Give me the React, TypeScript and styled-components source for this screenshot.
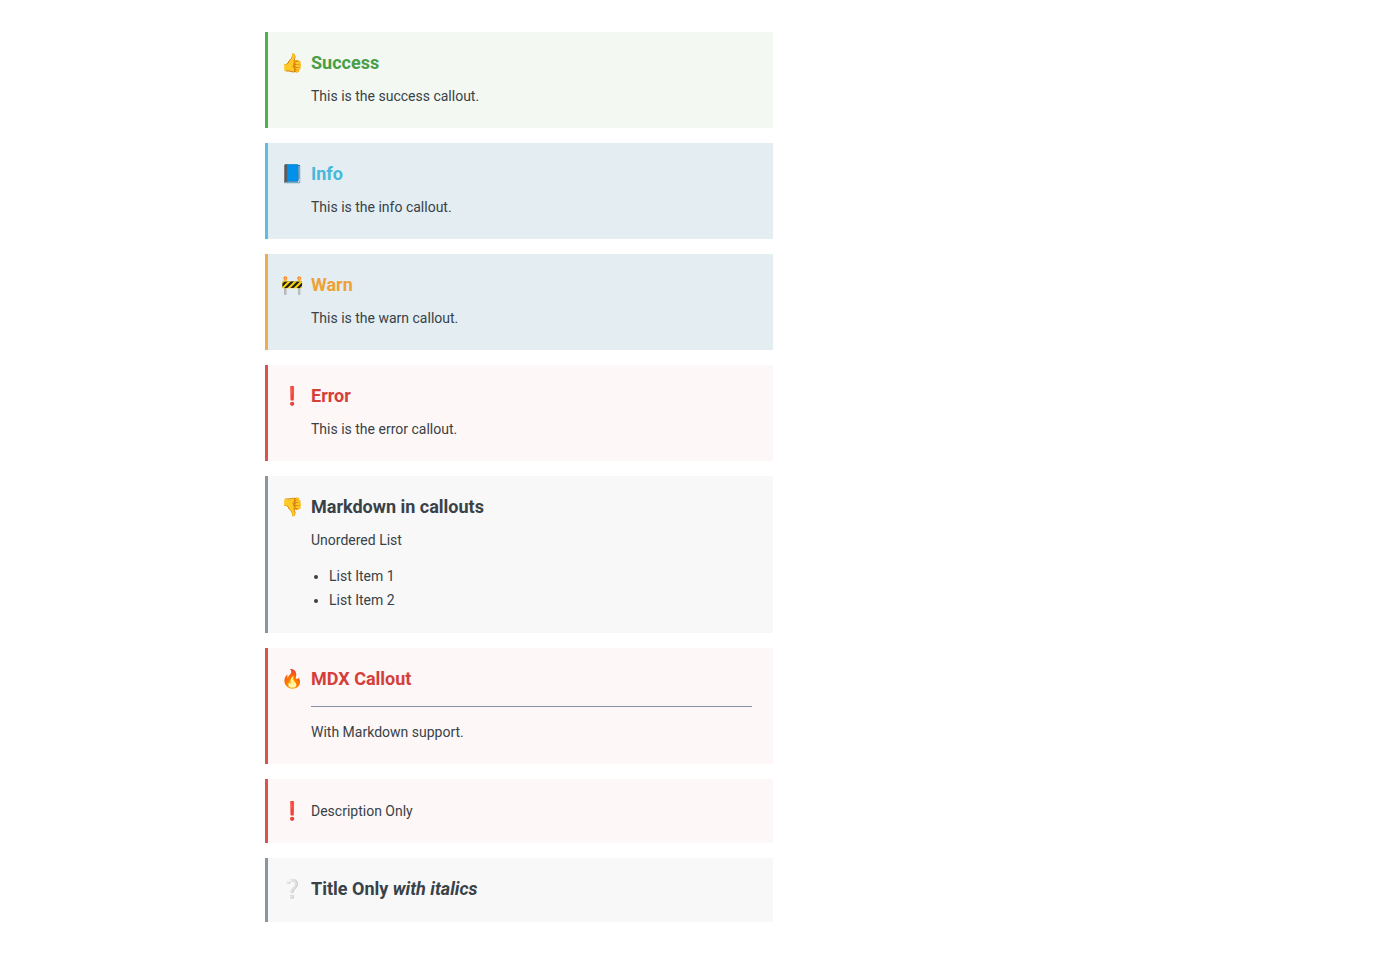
import React from "react";
import styled, { createGlobalStyle } from "styled-components";

const GlobalStyle = createGlobalStyle`
  *, *::before, *::after { box-sizing: border-box; }
  body {
    margin: 0;
    background: #ffffff;
    color: #384248;
    font-family: Roboto, "Liberation Sans", sans-serif;
    font-size: 14px;
    line-height: 24px;
  }
`;

type Theme = "success" | "info" | "warn" | "error" | "plain";

const themes: Record<Theme, { border: string; background: string; title: string }> = {
  success: { border: "#50af51", background: "#f3f8f3", title: "#489e49" },
  info: { border: "#5bc0de", background: "#e3edf2", title: "#46b8da" },
  warn: { border: "#f0ad4e", background: "#e3edf2", title: "#eea236" },
  error: { border: "#d9534f", background: "#fdf7f7", title: "#d43f3a" },
  plain: { border: "#8b959e", background: "#f8f8f9", title: "#384248" },
};

const Page = styled.main`
  display: flex;
  justify-content: center;
  padding: 32px 15px;
`;

const Layout = styled.div`
  display: flex;
  flex: 0 1 870px;
`;

const Article = styled.article`
  display: flex;
  flex: 0 1 508px;
  flex-direction: column;
  gap: 15px;
`;

const Box = styled.blockquote<{ $theme: Theme }>`
  display: grid;
  grid-template-columns: 30px 1fr;
  min-height: 64px;
  margin: 0;
  padding: 20px 21px 20px 13px;
  border-left: 3px solid ${(p) => themes[p.$theme].border};
  background: ${(p) => themes[p.$theme].background};
`;

const Icon = styled.span<{ $titled: boolean }>`
  font-size: 18px;
  line-height: ${(p) => (p.$titled ? 22 : 24)}px;
`;

const Content = styled.div`
  display: flex;
  flex-direction: column;
  gap: 10px;
`;

const Title = styled.h3<{ $theme: Theme }>`
  margin: 0;
  color: ${(p) => themes[p.$theme].title};
  font-size: 18px;
  font-weight: 700;
  line-height: 22px;
`;

const Text = styled.p`
  margin: 0;
`;

const List = styled.ul`
  margin: 2px 0 1px;
  padding-left: 18px;
`;

const Rule = styled.hr`
  width: 100%;
  height: 1px;
  margin: 6px 0 3px;
  border: 0;
  background: #8791a5;
`;

type CalloutProps = {
  theme: Theme;
  icon: string;
  title?: React.ReactNode;
  children?: React.ReactNode;
};

function Callout({ theme, icon, title, children }: CalloutProps) {
  return (
    <Box $theme={theme}>
      <Icon $titled={Boolean(title)}>{icon}</Icon>
      <Content>
        {title && <Title $theme={theme}>{title}</Title>}
        {children}
      </Content>
    </Box>
  );
}

export default function App() {
  return (
    <>
      <GlobalStyle />
      <Page>
        <Layout>
          <Article>
            <Callout theme="success" icon="👍" title="Success">
              <Text>This is the success callout.</Text>
            </Callout>
            <Callout theme="info" icon="📘" title="Info">
              <Text>This is the info callout.</Text>
            </Callout>
            <Callout theme="warn" icon="🚧" title="Warn">
              <Text>This is the warn callout.</Text>
            </Callout>
            <Callout theme="error" icon="❗️" title="Error">
              <Text>This is the error callout.</Text>
            </Callout>
            <Callout theme="plain" icon="👎" title="Markdown in callouts">
              <Text>Unordered List</Text>
              <List>
                <li>List Item 1</li>
                <li>List Item 2</li>
              </List>
            </Callout>
            <Callout theme="error" icon="🔥" title="MDX Callout">
              <Rule />
              <Text>With Markdown support.</Text>
            </Callout>
            <Callout theme="error" icon="❗️">
              <Text>Description Only</Text>
            </Callout>
            <Callout
              theme="plain"
              icon="❔"
              title={
                <>
                  Title Only <em>with italics</em>
                </>
              }
            />
          </Article>
        </Layout>
      </Page>
    </>
  );
}
